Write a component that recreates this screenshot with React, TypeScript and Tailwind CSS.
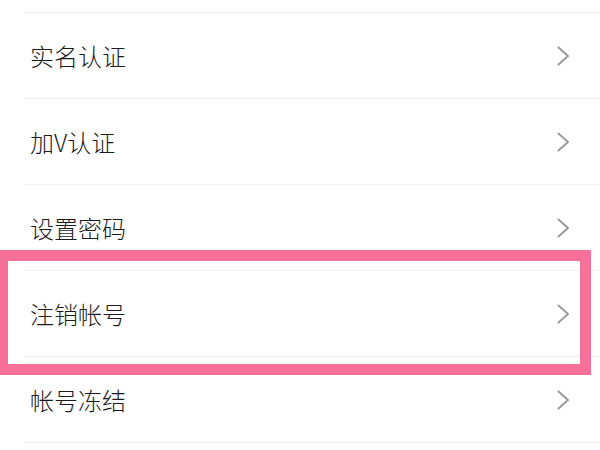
const rows = ["实名认证", "加V认证", "设置密码", "注销帐号", "帐号冻结"];

function Chevron() {
  return (
    <svg width="13" height="20" viewBox="0 0 13 20" fill="none">
      <polyline
        points="1.5,1.5 11,10 1.5,18.5"
        stroke="#9a9a9a"
        strokeWidth="2"
        strokeLinecap="round"
        strokeLinejoin="round"
      />
    </svg>
  );
}

export default function App() {
  return (
    <div
      className="relative w-[600px] h-[450px] overflow-hidden bg-white"
      style={{ fontFamily: '"Noto Sans CJK SC", "Noto Sans", sans-serif' }}
    >
      <div className="h-[13px] ml-[24px] border-b border-[#f0f0f0]" />
      {rows.map((label) => (
        <div
          key={label}
          className="h-[86px] ml-[24px] pl-[6px] pr-[30px] flex items-center justify-between border-b border-[#f0f0f0]"
        >
          <span className="text-[24px] leading-none font-light text-[#1c1c1c]">{label}</span>
          <Chevron />
        </div>
      ))}
      <div className="absolute left-[-3px] top-[250px] w-[594px] h-[125px] border-[11px] border-[#f7709a]" />
    </div>
  );
}
